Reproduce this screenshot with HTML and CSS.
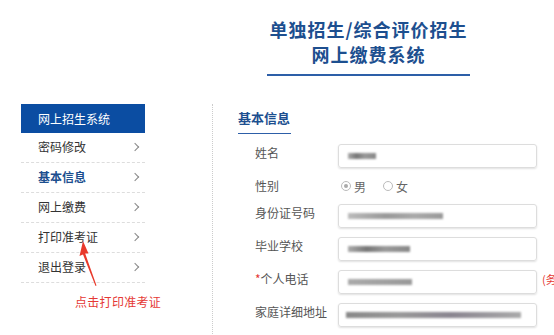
FILE: index.html
```html
<!DOCTYPE html>
<html lang="zh-CN">
<head>
  <meta charset="UTF-8" />
  <title>网上缴费系统</title>
  <link rel="stylesheet" href="styles.css">
</head>
<body>
  <div class="page">
    <div class="header">
      <h1>单独招生/综合评价招生<br>网上缴费系统</h1>
    </div>

    <div class="layout">
      <div class="sidebar">
        <div class="side-title">网上招生系统</div>
        <ul class="menu">
          <li><span>密码修改</span><i class="chev"></i></li>
          <li class="active"><span>基本信息</span><i class="chev"></i></li>
          <li><span>网上缴费</span><i class="chev"></i></li>
          <li><span>打印准考证</span><i class="chev"></i></li>
          <li><span>退出登录</span><i class="chev"></i></li>
        </ul>
      </div>

      <div class="main">
        <h2 class="section-title">基本信息</h2>
        <div class="form">
          <div class="row">
            <label>姓名</label>
            <div class="input"><span class="blur w-name"></span></div>
          </div>
          <div class="row row-radio">
            <label>性别</label>
            <div class="radios">
              <span class="radio checked"></span><span class="opt">男</span>
              <span class="radio"></span><span class="opt">女</span>
            </div>
          </div>
          <div class="row">
            <label>身份证号码</label>
            <div class="input"><span class="blur w-id"></span></div>
          </div>
          <div class="row">
            <label>毕业学校</label>
            <div class="input"><span class="blur w-school"></span></div>
          </div>
          <div class="row">
            <label><em>*</em>个人电话</label>
            <div class="input"><span class="blur w-phone"></span></div>
            <span class="hint">(务必填写)</span>
          </div>
          <div class="row">
            <label>家庭详细地址</label>
            <div class="input"><span class="blur w-addr"></span></div>
          </div>
        </div>
      </div>
    </div>

    <!-- screenshot annotation -->
    <svg class="arrow" width="30" height="60" viewBox="0 0 30 60">
      <polygon points="5,0 1.5,15 5,13.5 17.5,45 18.5,44.6 7.2,12.6 10.5,12.5" fill="#e8392b"/>
    </svg>
    <div class="note">点击打印准考证</div>
  </div>
</body>
</html>
```

FILE: styles.css
```css
body {
  margin: 0;
  font-family: "Noto Sans CJK SC", "Noto Sans", sans-serif;
  background: #fff;
  color: #333;
  overflow: hidden;
}

.page {
  position: relative;
  width: 554px;
  height: 335px;
  overflow: hidden;
}

.header {
  padding-top: 17px;
}

.header h1 {
  margin: 0 0 0 267px;
  width: 203px;
  padding-bottom: 7px;
  border-bottom: 2px solid #2d5fa8;
  text-align: center;
  font-size: 18px;
  line-height: 25px;
  letter-spacing: 1px;
  font-weight: 700;
  color: #1d4f8f;
}

.layout {
  display: flex;
  margin-top: 28px;
}

.sidebar {
  flex: none;
  width: 124px;
  margin-left: 21px;
}

.side-title {
  height: 29px;
  line-height: 29px;
  padding-left: 17px;
  background: #0b4da2;
  color: #fff;
  font-size: 12px;
}

.menu {
  list-style: none;
  margin: 0;
  padding: 0;
}

.menu li {
  display: flex;
  align-items: center;
  justify-content: space-between;
  height: 29px;
  padding: 0 7px 0 17px;
  border-bottom: 1px dashed #ddd;
  font-size: 12px;
  color: #333;
}

.menu li span {
  margin-top: -2px;
}

.menu li.active {
  color: #1d4f8f;
  font-weight: 700;
}

.chev {
  width: 5px;
  height: 5px;
  margin-top: -1px;
  border-top: 1px solid #888;
  border-right: 1px solid #888;
  transform: rotate(45deg);
}

.main {
  flex: none;
  width: 341px;
  margin-left: 67px;
  border-left: 1px dotted #ccc;
  height: 240px;
}

.section-title {
  display: inline-block;
  margin: 0 0 0 25px;
  padding: 5px 1px 6px 0;
  border-bottom: 1px solid #2d5fa8;
  font-size: 13px;
  line-height: 18px;
  font-weight: 700;
  color: #1d4f8f;
}

.form {
  padding: 10px 0 0 42px;
}

.row {
  display: flex;
  align-items: flex-start;
  margin-bottom: 9px;
  white-space: nowrap;
}

.row label {
  flex: none;
  width: 83px;
  font-size: 12px;
  line-height: 18px;
  color: #555;
}

.row label em {
  font-style: normal;
  color: #e53935;
}

.input {
  flex: none;
  position: relative;
  box-sizing: border-box;
  width: 199px;
  height: 24px;
  border: 1px solid #ddd;
  border-radius: 3px;
  box-shadow: 0 1px 2px rgba(0, 0, 0, 0.12);
}

.blur {
  position: absolute;
  left: 9px;
  top: 8px;
  height: 6px;
  background: linear-gradient(to right, #aaa, #777 30%, #999 60%, #888);
  filter: blur(0.8px);
}

.w-name { width: 28px; }
.w-id { width: 95px; background: linear-gradient(to right, #bbb, #999 40%, #aaa 70%, #999); }
.w-school { width: 62px; }
.w-phone { width: 64px; background: linear-gradient(to right, #aaa, #999); }
.w-addr { left: 7px; width: 175px; background: linear-gradient(to right, #888, #999 30%, #8a8590 60%, #aaa); }

.row-radio {
  height: 18px;
}

.radios {
  display: flex;
  align-items: center;
  height: 18px;
  margin-left: 3px;
  font-size: 12px;
  color: #666;
}

.radio {
  box-sizing: border-box;
  width: 10px;
  height: 10px;
  border: 1px solid #bbb;
  border-radius: 50%;
  margin-right: 3px;
  position: relative;
}

.radio.checked::after {
  content: "";
  position: absolute;
  left: 2px;
  top: 2px;
  width: 4px;
  height: 4px;
  border-radius: 50%;
  background: #aaa;
}

.opt {
  margin-right: 17px;
}

.hint {
  margin-left: 5px;
  font-size: 11px;
  line-height: 18px;
  color: #e53935;
}

.arrow {
  position: absolute;
  left: 78px;
  top: 241px;
}

.note {
  position: absolute;
  left: 75px;
  top: 293px;
  font-size: 12px;
  line-height: 18px;
  letter-spacing: 0.3px;
  color: #e53935;
}
```
